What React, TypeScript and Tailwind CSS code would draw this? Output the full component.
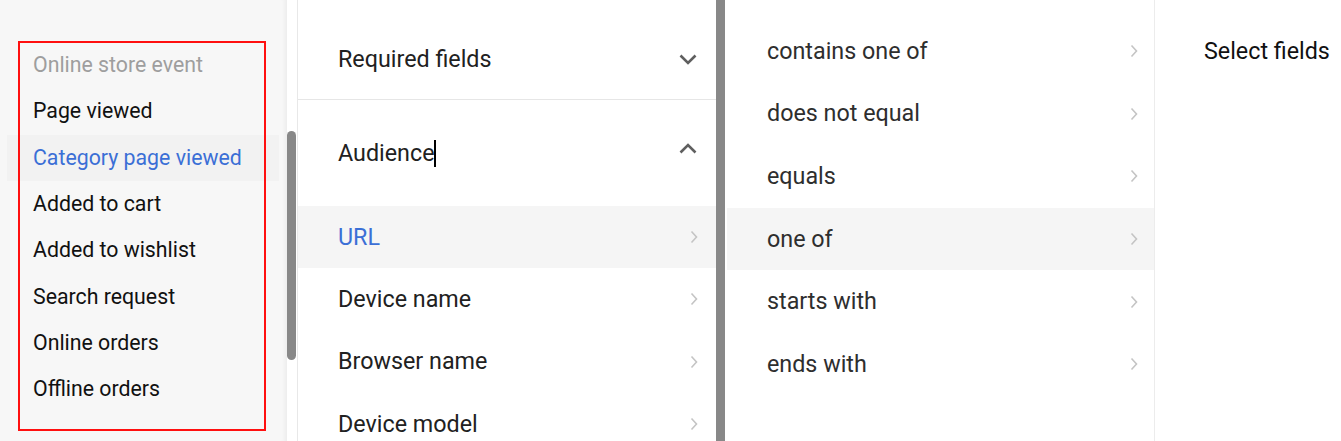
import React from "react"

const events = [
  "Online store event",
  "Page viewed",
  "Category page viewed",
  "Added to cart",
  "Added to wishlist",
  "Search request",
  "Online orders",
  "Offline orders",
]

const fields = ["URL", "Device name", "Browser name", "Device model"]

const operators = ["contains one of", "does not equal", "equals", "one of", "starts with", "ends with"]

function ChevronRight() {
  return (
    <svg width="8" height="14" viewBox="0 0 8 14" fill="none">
      <path d="M1.5 1.5 L6.5 7 L1.5 12.5" stroke="#c4c4c4" strokeWidth="1.6" />
    </svg>
  )
}

function Chevron({ up }: { up?: boolean }) {
  return (
    <svg width="18" height="11" viewBox="0 0 18 11" fill="none">
      <path
        d={up ? "M1.5 9.5 L9 2 L16.5 9.5" : "M1.5 1.5 L9 9 L16.5 1.5"}
        stroke="#5f5f5f"
        strokeWidth="2.6"
      />
    </svg>
  )
}

export default function App() {
  return (
    <div
      className="flex h-[441px] w-[1341px] overflow-hidden bg-white text-[23.3px]"
      style={{ fontFamily: "Roboto, 'Noto Sans', sans-serif" }}
    >
      {/* event list */}
      <div className="relative w-[287px] shrink-0 bg-[#f7f7f7] text-[21.3px] shadow-[inset_-5px_0_4px_-3px_rgba(0,0,0,0.05)]">
        <div className="ml-[7px] mt-[42px] w-[272px]">
          {events.map((e, i) => (
            <div
              key={e}
              className={`flex h-[46.3px] items-center pl-[26px] ${
                i === 0
                  ? "text-[#9e9e9e]"
                  : i === 2
                    ? "bg-[#f2f2f2] text-[#3b6fd6]"
                    : "text-[#111]"
              }`}
            >
              {e}
            </div>
          ))}
        </div>
        <div className="absolute left-[18px] top-[41px] h-[390px] w-[248px] border-2 border-[#ff1010]" />
      </div>

      {/* scrollbar track */}
      <div className="w-[10px] shrink-0 bg-white pt-[131px]">
        <div className="h-[229px] w-[9px] rounded-full bg-[#888]" />
      </div>

      {/* fields */}
      <div className="w-[419px] shrink-0 border-l border-[#e8e8e8]">
        <div className="flex h-[100px] items-center justify-between border-b border-[#e6e6e6] pl-[40px] pr-[19px] pt-[20px] text-[#212121]">
          <span>Required fields</span>
          <Chevron />
        </div>
        <div className="flex h-[106px] items-center justify-between pl-[40px] pr-[19px] text-[#212121]">
          <span className="flex items-center">
            Audience
            <span className="ml-[-1px] h-[27px] w-[2px] bg-black" />
          </span>
          <span className="mb-[10px]">
            <Chevron up />
          </span>
        </div>
        {fields.map((f, i) => (
          <div
            key={f}
            className={`flex h-[62.3px] items-center justify-between pl-[40px] pr-[18px] ${
              i === 0 ? "bg-[#f5f5f5] text-[#3b6fd6]" : "text-[#212121]"
            }`}
          >
            <span>{f}</span>
            <ChevronRight />
          </div>
        ))}
      </div>

      {/* scrollbar */}
      <div className="w-[9px] shrink-0 bg-[#888]" />

      {/* operators */}
      <div className="w-[430px] shrink-0 border-r border-[#ececec] pl-[2px] pt-[20px]">
        {operators.map((o, i) => (
          <div
            key={o}
            className={`flex h-[62.6px] items-center justify-between pl-[40px] pr-[16px] text-[#2e2e2e] ${
              i === 3 ? "bg-[#f5f5f5]" : ""
            }`}
          >
            <span>{o}</span>
            <ChevronRight />
          </div>
        ))}
      </div>

      {/* values */}
      <div className="flex-1 pl-[49px] pt-[36px] text-[#111]">
        <div className="leading-[30px]">Select fields</div>
      </div>
    </div>
  )
}
